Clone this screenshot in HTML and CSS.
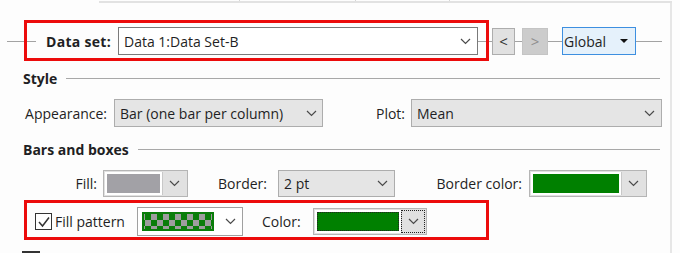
FILE: index.html
```html
<!DOCTYPE html>
<html lang="en">
<head>
  <meta charset="UTF-8">
  <meta name="viewport" content="width=device-width, initial-scale=1.0">
  <title>Data set style</title>
  <link rel="stylesheet" href="styles.css">
</head>
<body>
  <div class="tabstrip">
    <span class="tab tab1"></span>
    <span class="tab tab2"></span>
    <span class="tab tab3"></span>
    <span class="tab tab4"></span>
  </div>

  <div class="panel">
    <!-- data set chooser -->
    <div class="dataset-row">
      <span class="link-line lead"></span>
      <span class="dataset-label">Data set:</span>
      <div class="combo combo-white dataset-combo">
        <span>Data 1:Data Set-B</span>
        <svg class="chev" width="11" height="7" viewBox="0 0 11 7"><polyline points="1,1 5.5,5.5 10,1" /></svg>
      </div>
      <span class="link-line w14"></span>
      <button class="nav-btn">&lt;</button>
      <span class="link-line w7"></span>
      <button class="nav-btn disabled">&gt;</button>
      <span class="link-line w14"></span>
      <div class="global-btn"><span>Global</span><span class="tri"></span></div>
      <span class="link-line w26"></span>
      <div class="highlight highlight-dataset"></div>
    </div>

    <div class="section-head"><span>Style</span><span class="rule"></span></div>

    <div class="form-row">
      <span class="label label-appearance">Appearance:</span>
      <div class="combo appearance-combo">
        <span>Bar (one bar per column)</span>
        <svg class="chev" width="11" height="7" viewBox="0 0 11 7"><polyline points="1,1 5.5,5.5 10,1" /></svg>
      </div>
      <span class="label label-plot">Plot:</span>
      <div class="combo plot-combo">
        <span>Mean</span>
        <svg class="chev" width="11" height="7" viewBox="0 0 11 7"><polyline points="1,1 5.5,5.5 10,1" /></svg>
      </div>
    </div>

    <div class="section-head"><span>Bars and boxes</span><span class="rule"></span></div>

    <div class="form-row fill-row">
      <span class="label label-fill">Fill:</span>
      <div class="swatch-combo fill-combo">
        <span class="swatch swatch-grey"></span>
        <span class="swatch-btn"><svg class="chev" width="11" height="7" viewBox="0 0 11 7"><polyline points="1,1 5.5,5.5 10,1" /></svg></span>
      </div>
      <span class="label label-border">Border:</span>
      <div class="combo border-combo">
        <span>2 pt</span>
        <svg class="chev" width="11" height="7" viewBox="0 0 11 7"><polyline points="1,1 5.5,5.5 10,1" /></svg>
      </div>
      <span class="label label-bcolor">Border color:</span>
      <div class="swatch-combo bcolor-combo">
        <span class="swatch swatch-green"></span>
        <span class="swatch-btn"><svg class="chev" width="11" height="7" viewBox="0 0 11 7"><polyline points="1,1 5.5,5.5 10,1" /></svg></span>
      </div>
    </div>

    <div class="pattern-box">
      <span class="checkbox">
        <svg width="14" height="14" viewBox="0 0 14 14"><polyline points="2,7 5.5,11 12,2.5" /></svg>
      </span>
      <span class="check-label">Fill pattern</span>
      <div class="combo combo-white pattern-combo">
        <span class="checker"></span>
        <svg class="chev" width="11" height="7" viewBox="0 0 11 7"><polyline points="1,1 5.5,5.5 10,1" /></svg>
      </div>
      <span class="label label-color">Color:</span>
      <div class="swatch-combo color-combo">
        <span class="swatch swatch-green focused"></span>
        <span class="swatch-btn focused"><svg class="chev" width="11" height="7" viewBox="0 0 11 7"><polyline points="1,1 5.5,5.5 10,1" /></svg></span>
      </div>
    </div>

    <div class="next-check"></div>
  </div>
</body>
</html>
```

FILE: styles.css
```css
body {
  margin: 0;
  height: 253px;
  overflow: hidden;
  background: #fdfdfd;
  font-family: "Open Sans", "Noto Sans", sans-serif;
  font-size: 14px;
  color: #1f1f24;
}

.tabstrip {
  display: flex;
  margin-left: 99px;
  width: 573px;
  height: 1px;
  border-bottom: 2px solid #e2e2e2;
}

.tab {
  height: 1px;
  border-right: 1px solid #d6d6d6;
}

.tab1 { width: 140px; }
.tab2 { width: 115px; }
.tab3 { width: 93px; }
.tab4 { flex: 1; border-right: none; }

.panel {
  width: 670px;
  height: 250px;
  overflow: hidden;
  border-right: 2px solid #e6e6e6;
}

/* data set row */
.dataset-row {
  position: relative;
  display: flex;
  align-items: center;
  height: 28px;
  margin-top: 24px;
}

.link-line {
  height: 1px;
  background: #a3a3a3;
}

.lead { width: 29px; margin-left: 7px; margin-right: 10px; }
.w14 { width: 14px; }
.w7 { width: 7px; }
.w26 { width: 26px; }

.dataset-label {
  font-weight: bold;
  width: 72px;
  letter-spacing: 0.3px;
}

.combo {
  display: flex;
  align-items: center;
  justify-content: space-between;
  box-sizing: border-box;
  height: 28px;
  padding: 0 6px 0 5px;
  border: 1px solid #adadad;
  background: #e5e5e5;
}

.combo-white {
  background: #fff;
  border-color: #7a7a7a;
}

.chev polyline {
  fill: none;
  stroke: #4a4a4a;
  stroke-width: 1.2;
}

.dataset-combo { width: 360px; }

.nav-btn {
  box-sizing: border-box;
  height: 27px;
  padding: 0;
  border: 1px solid #adadad;
  background: #e1e1e1;
  font-family: inherit;
  font-size: 15px;
  color: #333;
}

.nav-btn:first-of-type { width: 23px; }

.nav-btn.disabled {
  width: 26px;
  border-color: #c4c4c4;
  background: #cccccc;
  color: #8e8e8e;
}

.global-btn {
  display: flex;
  align-items: center;
  box-sizing: border-box;
  width: 74px;
  height: 28px;
  padding: 0 0 0 1px;
  border: 1px solid #3d8fe0;
  background: #e5f1fb;
}

.tri {
  margin-left: 14px;
  border-left: 4px solid transparent;
  border-right: 4px solid transparent;
  border-top: 4px solid #111;
}

.highlight {
  position: absolute;
  border: 3px solid #ec0b0b;
  pointer-events: none;
}

.highlight-dataset {
  left: 24px;
  top: -7px;
  width: 459px;
  height: 35px;
}

/* sections */
.section-head {
  display: flex;
  align-items: center;
  gap: 9px;
  height: 20px;
  margin: 13px 10px 0 23px;
  font-weight: bold;
}

.section-head + .form-row { margin-top: 11px; }
.form-row + .section-head { margin-top: 12px; }

.rule {
  flex: 1;
  height: 1px;
  background: #a8a8a8;
}

.form-row {
  display: flex;
  align-items: center;
  height: 28px;
}

.label { text-align: right; }

.label-appearance { width: 84px; margin-left: 23px; margin-right: 7px; }
.appearance-combo { width: 209px; padding-right: 5px; }
.label-plot { width: 82px; margin-right: 6px; }
.plot-combo { width: 251px; }

/* bars and boxes */
.fill-row {
  height: 27px;
  margin-top: 10px;
}

.label-fill { width: 74px; margin-left: 23px; margin-right: 6px; }

.swatch-combo {
  display: flex;
  box-sizing: border-box;
  height: 27px;
  padding: 1px;
  border: 1px solid #b5b5b5;
  background: #e1e1e1;
}

.swatch {
  flex: 1;
  border: 2px solid #fff;
}

.swatch-grey { background: #a2a1a6; }
.swatch-green { background: #008000; }

.swatch-btn {
  display: flex;
  align-items: center;
  justify-content: center;
  width: 23px;
  border-left: 1px solid #c8c8c8;
}

.fill-combo { width: 85px; }
.label-border { width: 47px; margin-left: 30px; margin-right: 13px; }
.border-combo { width: 117px; height: 27px; }
.label-bcolor { width: 86px; margin-left: 41px; margin-right: 7px; }
.bcolor-combo { width: 118px; }

/* fill pattern */
.pattern-box {
  display: flex;
  align-items: center;
  box-sizing: border-box;
  width: 465px;
  margin: 3px 0 0 24px;
  padding: 4px 0 1px 8px;
  border: 3px solid #ec0b0b;
}

.checkbox {
  display: flex;
  align-items: center;
  justify-content: center;
  box-sizing: border-box;
  width: 17px;
  height: 17px;
  border: 1px solid #333;
  background: #fff;
}

.checkbox polyline {
  fill: none;
  stroke: #333;
  stroke-width: 1.5;
}

.check-label { margin-left: 3px; width: 82px; }

.pattern-combo {
  width: 106px;
  height: 29px;
  padding: 0 6px 0 4px;
  border-color: #a0a0a0;
}

.checker {
  width: 72px;
  height: 19px;
  box-sizing: border-box;
  border: 2px solid #0a7d0a;
  background-color: #0a7d0a;
  background-image: conic-gradient(#9d9d9d 25%, transparent 0 50%, #9d9d9d 0 75%, transparent 0);
  background-size: 12px 12px;
  background-position: 1px 0;
}

.label-color { width: 42px; margin-left: 19px; margin-right: 9px; text-align: left; }

.color-combo { width: 114px; }

.focused {
  outline: 1px dotted #222;
  outline-offset: -3px;
}

.swatch-btn.focused { outline-offset: -1px; }

.next-check {
  box-sizing: border-box;
  width: 18px;
  height: 18px;
  margin: 11px 0 0 22px;
  border: 2px solid #333;
}
```
